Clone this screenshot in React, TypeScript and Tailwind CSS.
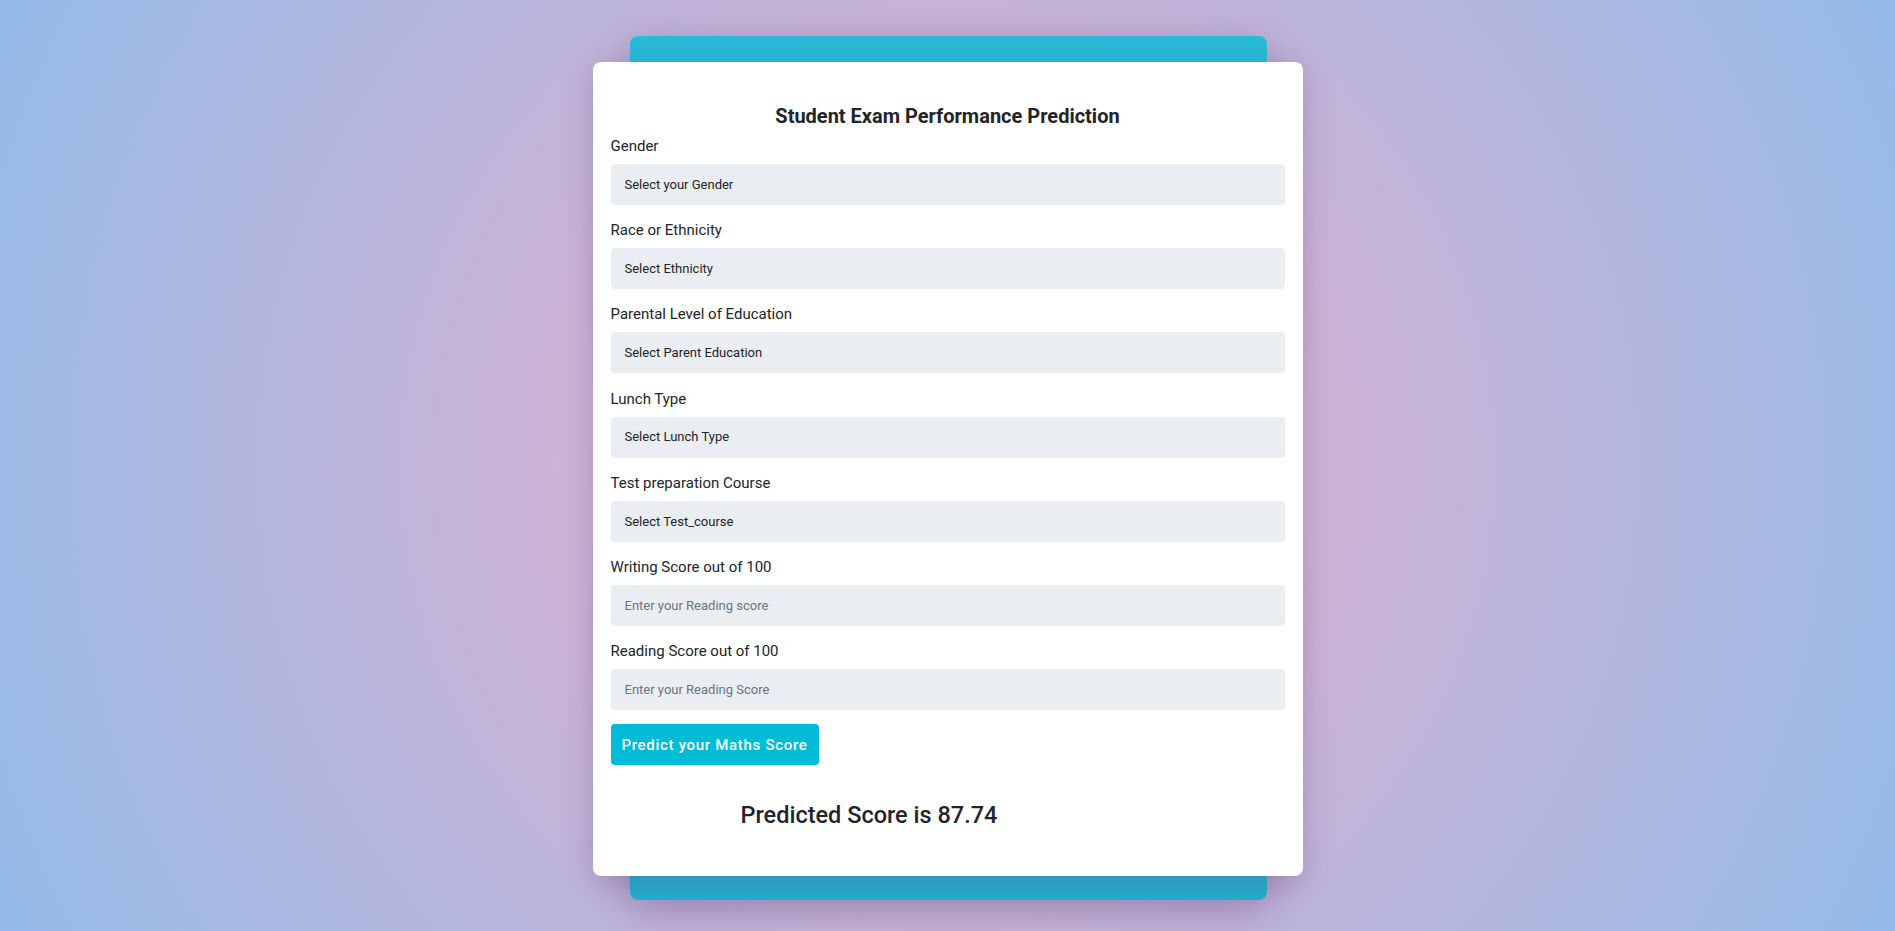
export default function App() {
  const selects = [
    { label: "Gender", placeholder: "Select your Gender" },
    { label: "Race or Ethnicity", placeholder: "Select Ethnicity" },
    { label: "Parental Level of Education", placeholder: "Select Parent Education" },
    { label: "Lunch Type", placeholder: "Select Lunch Type" },
    { label: "Test preparation Course", placeholder: "Select Test_course" },
  ];
  const scores = [
    { label: "Writing Score out of 100", placeholder: "Enter your Reading score" },
    { label: "Reading Score out of 100", placeholder: "Enter your Reading Score" },
  ];

  return (
    <div
      className="min-h-screen w-full flex justify-center pt-[62px] text-[#212529]"
      style={{
        fontFamily: "Roboto, 'Liberation Sans', sans-serif",
        background: "radial-gradient(circle, #eeaeca 0%, #94bbe9 100%)",
      }}
    >
      <div className="relative w-[710px] h-[814px]">
        {/* cyan layer behind the card */}
        <div className="absolute left-[37px] right-[36px] top-[-26px] bottom-[-24px] rounded-lg bg-gradient-to-b from-[#28bad8] to-[#26b0cf] shadow-[0_10px_40px_rgba(80,50,110,0.35)]" />
        <div className="relative h-full bg-white rounded-lg shadow-[0_8px_30px_rgba(70,40,100,0.25)] px-[18px] pt-[42px]">
          <h1 className="text-center text-[20px] leading-6 font-bold mb-[6px]">
            Student Exam Performance Prediction
          </h1>
          {selects.map((s) => (
            <div key={s.label} className="mb-[13.2px]">
              <label className="block text-[15px] leading-6 mb-[6px]">{s.label}</label>
              <div className="h-[41px] rounded bg-[#eaedf1] flex items-center px-[14px] text-[13px] text-[#212529]">
                {s.placeholder}
              </div>
            </div>
          ))}
          {scores.map((s) => (
            <div key={s.label} className="mb-[13.2px]">
              <label className="block text-[15px] leading-6 mb-[6px]">{s.label}</label>
              <input
                type="number"
                placeholder={s.placeholder}
                className="w-full h-[41px] rounded bg-[#eaedf1] px-[14px] text-[13px] outline-none placeholder:text-[#6c757d]"
              />
            </div>
          ))}
          <button className="mt-[1px] h-[41px] w-[208px] rounded bg-[#00bcd6] text-white text-[15px] font-medium tracking-[0.7px]">
            Predict your Maths Score
          </button>
          <h2 className="mt-[35px] pl-[130px] text-[23.5px] leading-[30px] font-medium">
            Predicted Score is 87.74
          </h2>
        </div>
      </div>
    </div>
  );
}
